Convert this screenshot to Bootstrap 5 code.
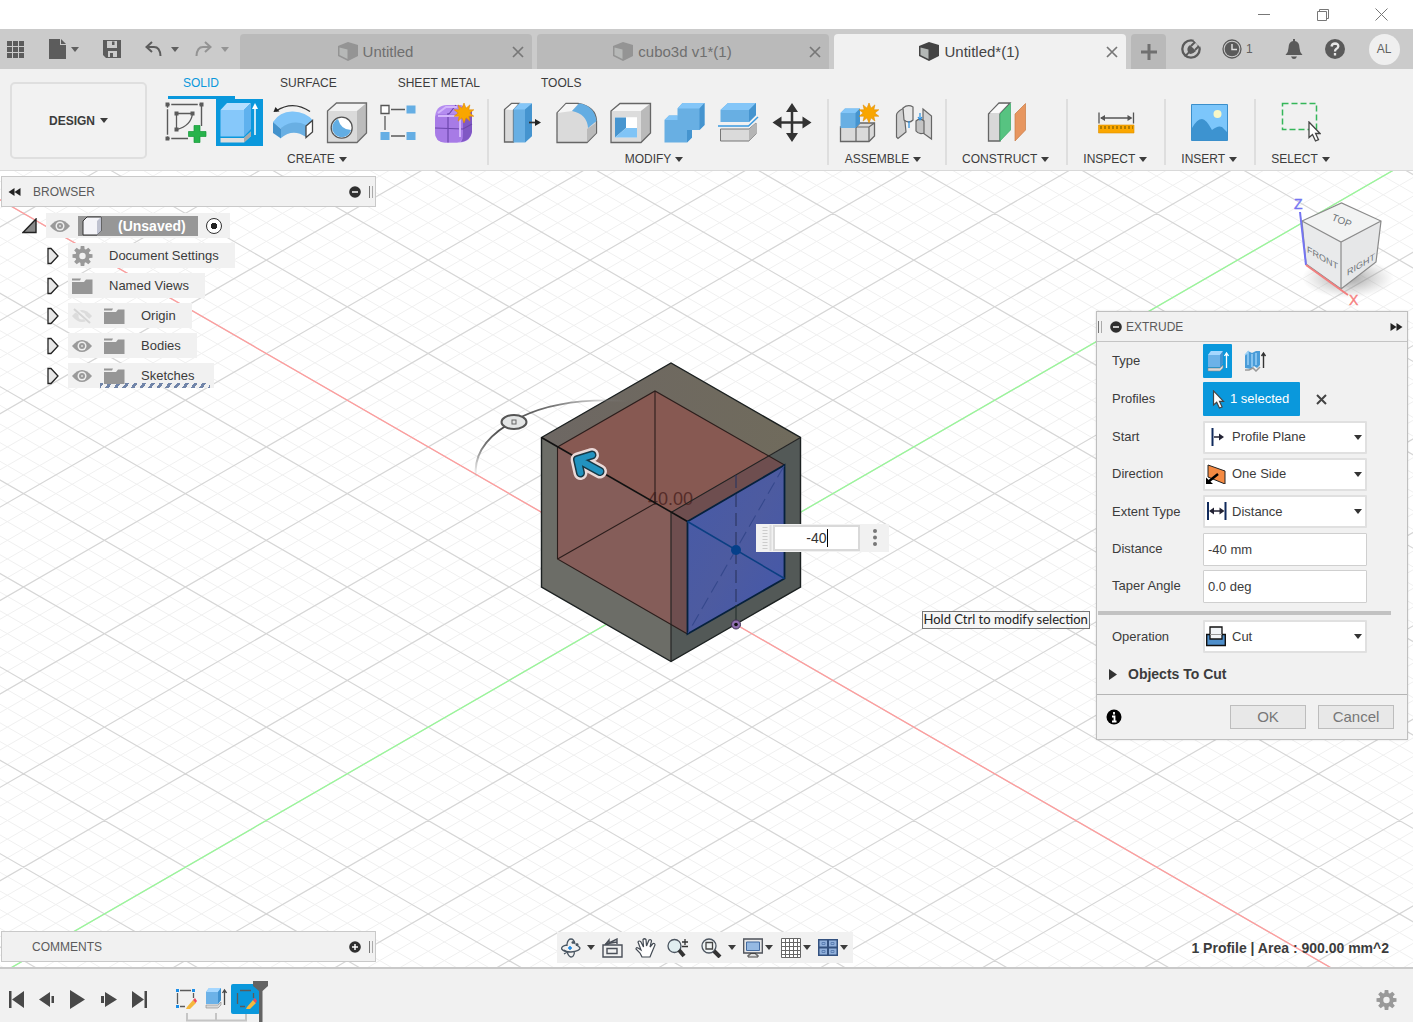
<!DOCTYPE html>
<html lang="en">
<head>
<meta charset="utf-8">
<meta name="viewport" content="width=device-width, initial-scale=1">
<title>Untitled*(1)</title>
<link href="https://cdn.jsdelivr.net/npm/bootstrap@5.3.0/dist/css/bootstrap.min.css" rel="stylesheet">
<style>
:root{--accent:#0a98dc;--panel:#f1f1f1;--line:#c9c9c9;--ink:#3c3c3c}
body{font-family:"Liberation Sans",Arial,sans-serif;font-size:13px;line-height:16px;color:var(--ink);background:#fff}
svg{display:block;flex:none}
button{color:inherit}
.plain{border:0;background:none;padding:0;display:flex;align-items:center;justify-content:center}
.dropdown-toggle::after{border-top:5px solid;border-left:4px solid transparent;border-right:4px solid transparent;margin-left:5px;vertical-align:2px}
.window-bar{height:29px;padding-right:25px;gap:46px}
.app-bar{height:40px;background:#cbcbcb;color:#5f5f5f}
.quick-tools{width:240px;padding-left:6px}
.quick-tools .step::after{margin-left:9px}
.doc-tab{height:35px;margin-right:5px;background:#bababa;border-radius:4px 4px 0 0;color:#6f6f6f;font-size:15px;flex:1 1 0;padding-right:7px}
.doc-tab.active{background:var(--panel);color:#444}
.doc-tab a{color:inherit;text-decoration:none}
.doc-tab .name{gap:5px}
.new-tab{width:35px;height:35px;background:#b9b9b9;border-radius:4px 4px 0 0}
.session{width:247px;padding-left:15px;font-size:12px}
.s-job{margin-left:21px}.s-bell{margin-left:32px}.s-help{margin-left:22px}
.avatar{width:31px;height:31px;border-radius:50%;background:#efefef;margin-left:24px}
.ribbon{height:102px;background:var(--panel);border-bottom:1px solid #d9d9d9;font-size:12px;padding-left:10px}
.workspace-btn{width:137px;height:77px;margin-top:13px;border:2px solid #dfdfdf;border-radius:5px;background:#f2f2f2;font-weight:700}
.ribbon-body{padding-left:8px}
.ribbon-tabs{height:30px;padding-left:13px}
.ribbon-tabs .nav-link{color:inherit;padding:6px 16px 5px;border-bottom:3px solid transparent;margin-right:29px}
.ribbon-tabs .nav-link.active{color:var(--accent);border-color:var(--accent);padding:6px 16px 5px 15px}
.tool-group{height:66px;padding:0 5px 0 3px}
.tool-group + .tool-group{border-left:2px solid #dedede}
.tool-group.wide{padding:0 8px 0 6px}
.tool-group .plain.big{width:54px;height:48px}
.tool-label{padding:4px 12px 0;height:20px}
.tool-group:nth-child(-n+3) .tool-label{padding-right:18px}
.tool-label .dropdown-toggle::after{margin-left:4px}
.canvas-area{min-height:700px;overflow:hidden;background:#fff}
.panel-head{width:375px;height:31px;background:var(--panel);border:1px solid var(--line);font-size:12px;color:#5b5b5b;padding:0 2px 0 6px}
.browser-head{top:5px;left:1px}
.comments-head{bottom:5px;left:1px}
.grip{width:4px;height:12px;border-left:1px solid #777;border-right:1px solid #aaa}
.tree{top:42px;left:22px}
.tree li{height:25px;margin-bottom:5px}
.tree .chip{background:var(--panel);height:25px;padding-right:16px}
.tree .kids{padding-left:24px}
.root-name{background:#979797;color:#fff;font-size:14px;font-weight:700;height:20px;padding-right:12px;border:0}
.activate{appearance:none;width:16px;height:16px;border:1px solid #333;border-radius:50%;background:radial-gradient(circle,#222 0 3px,#fff 3px)}
.edited{background:repeating-linear-gradient(125deg,#7084a8 0 3px,transparent 3px 7px) bottom/100% 5px no-repeat}
.dialog-box{top:140px;right:5px;width:312px;background:var(--panel);border:1px solid #bfbfbf;box-shadow:0 0 2px #0002}
.dialog-head{height:30px;border-bottom:1px solid #c4c4c4;font-size:12px;color:#5b5b5b;padding:0 4px 0 1px}
.field-rows{height:263px}
.field-row label,.field-row .lab{width:91px}
.field-row{padding-left:15px}
.op-row{padding-top:5px;padding-bottom:1px}
.box{width:164px;position:relative}
.box select,.box input{width:100%;height:33px;border:2px solid #e0e0e0;background:#fff;color:inherit;border-radius:1px;padding:0 3px;outline:0;appearance:none}
.box input{border:1px solid #cfcfcf;padding:0 4px}
.box select{padding-left:27px}
.box svg{position:absolute;top:6px;left:3px;pointer-events:none}
.box::after{content:"";position:absolute;right:5px;top:14px;border:4px solid transparent;border-top:5px solid #333;pointer-events:none}
.box.entry::after{display:none}
.sel-btn{background:var(--accent);color:#fff;border:0;height:34px;border-radius:1px}
.type-btn{width:29px}
.pick-btn{width:97px}
.objects-btn{font-size:14px}
.rule-bar{height:4px;background:#c2c2c2;margin:6px 16px 0 1px}
.dialog-foot{height:45px;border-top:1px solid #b5b5b5;padding:0 13px 0 9px}
.foot-btn{width:76px;height:24px;border:1px solid #bdbdbd;background:#e8e8e8;color:#777;font-size:15px;line-height:20px;padding:0}
.view-cube{top:19px;right:13px}
.mini-entry{left:calc(50% + 49px);top:calc(50% - 45px);width:133px;height:28px;background:var(--panel)}
.mini-entry input{width:87px;height:26px;border:2px solid #d9d9d9;font-size:14px;text-align:right;padding:0 31px 0 0;color:#333;outline:0}
.caret-bar{width:1px;height:18px;background:#000;left:71px;top:5px}
.hint{left:calc(50% + 215px);top:calc(50% + 42px);height:18px;border:1px solid #777;background:#f6f6f6;color:#222;font:13px/15px Lato,sans-serif;padding:0 1px;white-space:nowrap}
.nav-tools{left:50%;bottom:4px;height:31px;width:296px;margin-left:-150px;background:var(--panel);font-size:12px}
.nav-tools .dropdown-toggle::after{margin-left:2px;vertical-align:0}
.selection-info{right:24px;bottom:11px;font-size:14px;font-weight:700}
.timeline{height:55px;background:var(--panel);border-top:2px solid #c9c9c9;padding:8px 16px 0 8px;color:#484848}
.play-set{gap:15px}
.history{margin-left:26px}
</style>
</head>
<body class="d-flex flex-column min-vh-100 m-0">

<svg width="0" height="0" class="position-absolute" aria-hidden="true">
  <defs>
    <symbol id="doc" viewBox="0 0 20 20"><path d="M0 4 10 0 20 3 20 14 10 19 0 14z" fill="currentColor"/><path d="M1.500 5.500 9.500 7.500V17L1.500 13z" fill="#b4b8b6"/></symbol>
    <symbol id="close" viewBox="0 0 12 12"><path d="M1 1 11 11M11 1 1 11" stroke="#777" stroke-width="1.700"/></symbol>
    <symbol id="star" viewBox="-11 -11 22 22"><path d="M0-10 2-4.800 5.900-8.100 4.800-3.200 9.800-3.200 5.800 0 9.800 3.200 4.800 3.200 5.900 8.100 2 4.800 0 10-2 4.800-5.900 8.100-4.800 3.200-9.800 3.200-5.800 0-9.800-3.200-4.800-3.200-5.900-8.100-2-4.800z" fill="#f9a600" stroke="#e08b00" stroke-width=".6"/></symbol>
    <symbol id="eye" viewBox="0 0 20 14"><path d="M0 7Q10-5 20 7 10 19 0 7z" fill="#9a9a9a"/><circle cx="10" cy="7" r="4.500" fill="#efefef"/><circle cx="10" cy="7" r="3" fill="#9a9a9a"/><circle cx="10" cy="7" r="1" fill="#ddd"/></symbol>
    <symbol id="eyeoff" viewBox="0 0 20 16"><path d="M0 8Q10-4 20 8 10 20 0 8z" fill="#dcdcdc"/><circle cx="10" cy="8" r="3.500" fill="#f1f1f1"/><path d="M2 0 19 15" stroke="#f1f1f1" stroke-width="4"/><path d="M2 1 18 15" stroke="#d5d5d5" stroke-width="2"/></symbol>
    <symbol id="folder" viewBox="0 0 21 16"><path d="M0 4H12L14 1.500H20.500V16H0z" fill="#969696"/><path d="M0 .5H9L8 2.500H0z" fill="#969696"/></symbol>
    <symbol id="twist" viewBox="0 0 12 18"><path d="M1 1.500H4L11 9 4 16.500H1z" fill="#e8e8e8" stroke="#222" stroke-width="1.300"/></symbol>
    <symbol id="gear" viewBox="-10 -10 20 20"><g fill="#999"><path d="M-1.800-10H1.800L2.300-5H-2.300zM-1.800 10H1.800L2.300 5H-2.300z"/><path d="M-1.800-10H1.800L2.300-5H-2.300zM-1.800 10H1.800L2.300 5H-2.300z" transform="rotate(45)"/><path d="M-1.800-10H1.800L2.300-5H-2.300zM-1.800 10H1.800L2.300 5H-2.300z" transform="rotate(90)"/><path d="M-1.800-10H1.800L2.300-5H-2.300zM-1.800 10H1.800L2.300 5H-2.300z" transform="rotate(135)"/></g><circle r="5.200" fill="none" stroke="#999" stroke-width="4"/></symbol>
    <symbol id="box-up" viewBox="0 0 22 22"><path d="M1 5 4 1H16V13L13 17H1z" fill="#6cb2e8"/><path d="M1 5 4 1H16L13 5z" fill="#a5d7ff"/><path d="M13 5 16 1V13L13 17z" fill="#3f92d0"/><path d="M1 18H13L16 15V18L13 21H1z" fill="#d9d9d9" stroke="#888" stroke-width=".6"/><path d="M19.500 18V3M17.500 6 19.500 3 21.500 6" stroke="currentColor" stroke-width="1.300" fill="none"/></symbol>
    <symbol id="arrow" viewBox="0 0 13 21"><path d="M1 1V16.500L4.500 13.500 7.500 20 10.500 18.700 7.600 12.500H12z" fill="#fff" stroke="#444" stroke-width="1.300"/></symbol>
    <symbol id="left2" viewBox="0 0 12 8"><path d="M6 0V8L0 4zM12 0V8L6 4z" fill="#222"/></symbol>
    <symbol id="minus" viewBox="0 0 12 12"><circle cx="6" cy="6" r="5.800" fill="#2f2f2f"/><path d="M3 6H9" stroke="#fff" stroke-width="1.500"/></symbol>
    <symbol id="sk" viewBox="0 0 22 22"><path d="M5 2.500H16M2.500 5V16M18.500 5V10M5 18.500H10" fill="none" stroke="#5b5b5b" stroke-width="1.300"/><path d="M12 19 18 12 21 15 15 21 11 21z" fill="#f5b83d"/><path d="M18 12 20 10 22 13 20.500 15z" fill="#f04a5a"/></symbol>
    <linearGradient id="topFace"><stop offset="0" stop-color="#6d6763"/><stop offset="1" stop-color="#706b5c"/></linearGradient>
    <linearGradient id="blueFace" x2="1" y2="1"><stop offset="0" stop-color="#465aa8"/><stop offset=".5" stop-color="#4d5ba0"/><stop offset="1" stop-color="#4357ab"/></linearGradient>
    <linearGradient id="arcFade"><stop offset="0" stop-color="#555"/><stop offset=".3" stop-color="#777"/><stop offset="1" stop-color="#888" stop-opacity="0"/></linearGradient>
    <linearGradient id="arcDown" x1="0" y1="1" x2="0" y2="0"><stop offset="0" stop-color="#999" stop-opacity="0"/><stop offset=".6" stop-color="#777"/><stop offset="1" stop-color="#444"/></linearGradient>
    <radialGradient id="shade"><stop offset="0" stop-color="#777" stop-opacity=".7"/><stop offset="1" stop-color="#999" stop-opacity="0"/></radialGradient>
  </defs>
</svg>

<header>
  <div class="window-bar d-flex justify-content-end align-items-center">
    <button class="plain" aria-label="Minimize"><svg width="13" height="13"><path d="M0 6.500H12" stroke="#777"/></svg></button>
    <button class="plain" aria-label="Restore"><svg width="12" height="13" fill="none" stroke="#777"><path d="M.5 3.500H9.500V12.500H.5zM2.500 3V1.500H11.500V10.500H10"/></svg></button>
    <button class="plain" aria-label="Close window"><svg width="13" height="13"><path d="M.5.5 12.500 12.500M12.500.5.5 12.500" stroke="#777"/></svg></button>
  </div>

  <div class="app-bar d-flex align-items-end">
    <div class="quick-tools d-flex align-items-center align-self-stretch">
      <button class="plain" aria-label="Data panel"><svg width="19" height="18" fill="#5c5c5c"><path d="M1 1h5v5H1zM7 1h5v5H7zM13 1h5v5h-5zM1 7h5v5H1zM7 7h5v5H7zM13 7h5v5h-5zM1 13h5v5H1zM7 13h5v5H7zM13 13h5v5h-5z"/></svg></button>
      <button class="plain dropdown-toggle ms-4" aria-label="File"><svg width="17" height="20" fill="#5c5c5c"><path d="M0 0H11V6H17V20H0z"/><path d="M12 0 17 5H12z"/></svg></button>
      <button class="plain ms-4" aria-label="Save"><svg width="18" height="18"><path d="M0 0H18V18H3L0 15z" fill="#5c5c5c"/><path d="M4 1H14V8H4zM5 11H14V17H5z" fill="#cbcbcb"/><path d="M9 1.500H11.500V5H9zM7 13H10V17H7z" fill="#5c5c5c"/></svg></button>
      <button class="plain dropdown-toggle step ms-4" aria-label="Undo"><svg width="17" height="16" fill="none" stroke="#5c5c5c" stroke-width="2"><path d="M7 1 1.500 6 7 11M2 6H9Q15 6 15.500 15"/></svg></button>
      <button class="plain dropdown-toggle step ms-3 opacity-50" aria-label="Redo"><svg width="17" height="16" fill="none" stroke="#5c5c5c" stroke-width="2"><path d="M10 1 15.500 6 10 11M15 6H8Q2 6 1.500 15"/></svg></button>
    </div>
    <nav class="d-flex flex-fill">
      <div class="doc-tab d-flex align-items-center"><div class="name flex-fill d-flex justify-content-center align-items-center"><svg class="opacity-50" width="20" height="20"><use href="#doc"/></svg><a href="#">Untitled</a></div><button class="plain" aria-label="Close Untitled"><svg width="14" height="12"><use href="#close"/></svg></button></div>
      <div class="doc-tab d-flex align-items-center"><div class="name flex-fill d-flex justify-content-center align-items-center"><svg class="opacity-50" width="20" height="20"><use href="#doc"/></svg><a href="#">cubo3d v1*(1)</a></div><button class="plain" aria-label="Close cubo3d"><svg width="14" height="12"><use href="#close"/></svg></button></div>
      <div class="doc-tab active d-flex align-items-center"><div class="name flex-fill d-flex justify-content-center align-items-center"><svg width="20" height="20"><use href="#doc"/></svg><a href="#" aria-current="page">Untitled*(1)</a></div><button class="plain" aria-label="Close Untitled (1)"><svg width="14" height="12"><use href="#close"/></svg></button></div>
      <button class="plain new-tab" aria-label="New design"><svg width="16" height="16"><path d="M8 0V16M0 8H16" stroke="#707070" stroke-width="3"/></svg></button>
    </nav>
    <div class="session d-flex align-items-center align-self-stretch">
      <button class="plain" aria-label="Extensions"><svg width="20" height="20"><circle cx="10" cy="10" r="8.700" fill="none" stroke="#5a5a5a" stroke-width="2.300"/><path d="M14 0 20 7" stroke="#cbcbcb" stroke-width="4"/><path d="M3 17 7 13Q5 9 9 6L15 12Q11 16 8 14.500L5 18z" fill="#5a5a5a"/><path d="M10 7 14 3M14 11 18 7" stroke="#5a5a5a" stroke-width="2"/></svg></button>
      <button class="plain s-job" aria-label="Job status"><svg class="me-1" width="20" height="20"><circle cx="10" cy="10" r="9" fill="none" stroke="#5a5a5a" stroke-width="1.300"/><circle cx="10" cy="10" r="7.300" fill="#5a5a5a"/><path d="M10 5V10.500H15" stroke="#ddd" stroke-width="1.500" fill="none"/></svg>1</button>
      <button class="plain s-bell" aria-label="Notifications"><svg width="18" height="20" fill="#5a5a5a"><path d="M8 0H10V2Q14.500 3 14.500 9 14.500 13 17.500 16H.5Q3.500 13 3.500 9 3.500 3 8 2zM6 17.500H12Q11 20 9 20 7 20 6 17.500z"/></svg></button>
      <button class="plain s-help" aria-label="Help"><svg width="20" height="20"><circle cx="10" cy="10" r="10" fill="#5a5a5a"/><path d="M6.500 7.500Q7 4.500 10 4.500 13.500 4.700 13.300 7.500 13 9 11.200 10 10 10.800 10 12.500M10 14V16.500" fill="none" stroke="#e8e8e8" stroke-width="2.300"/></svg></button>
      <button class="plain avatar" aria-label="Account">AL</button>
    </div>
  </div>

  <div class="ribbon d-flex">
    <button class="workspace-btn dropdown-toggle">DESIGN</button>
    <div class="ribbon-body flex-fill">
      <nav class="ribbon-tabs nav flex-nowrap">
        <a class="nav-link active" href="#">SOLID</a><a class="nav-link" href="#">SURFACE</a><a class="nav-link" href="#">SHEET METAL</a><a class="nav-link" href="#">TOOLS</a>
      </nav>
      <div class="d-flex">
        <div class="tool-group">
          <div class="d-flex">
            <button class="plain big" aria-label="Create sketch"><svg width="48" height="48"><path d="M6.500 5.500H40.500V27M6.500 5.500V39.500H27" fill="none" stroke="#5a5a5a" stroke-width="1.400"/><path d="M15.500 14.500H31.500Q30 27 15.500 30.500z" fill="none" stroke="#5a5a5a" stroke-width="1.300"/><path d="M4.500 3.500h4v4h-4zM38.500 3.500h4v4h-4zM4.500 37.500h4v4h-4zM13.500 12.500h4v4h-4zM29.500 12.500h4v4h-4zM13.500 28.500h4v4h-4z" fill="#5a5a5a"/><path d="M9.500 3V8M37.500 3V8M4 9.500H9M4 36.500H9M9.500 37V42" stroke="#f1f1f1" stroke-width="1.500"/><path d="M33 26.500H39V32.500H45V37.500H39V43.500H33V37.500H27.500V32.500H33z" fill="#27b34b" stroke="#14993a" stroke-width=".7"/></svg></button>
            <button class="plain big" aria-label="Extrude"><svg width="48" height="48"><path d="M1 0H48V47H1z" fill="#0a98dc"/><path d="M5.500 11H29V37.500H5.500z" fill="#86c8fa"/><path d="M5.500 11 12 4H36L29 11z" fill="#b3deff"/><path d="M29 11 36 4V30L29 37.500z" fill="#5fb1ee"/><path d="M5.500 39H29L36 32.500V37L29 43.500H5.500z" fill="#dedede"/><path d="M29 39 36 32.500V37L29 43.500z" fill="#a9a9a9"/><path d="M40 36V9" stroke="#fff" stroke-width="1.500"/><path d="M37 10 40 4 43 10z" fill="#fff"/></svg></button>
            <button class="plain big" aria-label="Revolve"><svg width="48" height="48"><path d="M7 12Q24 1 41 12.500" fill="none" stroke="#333" stroke-width="1.400"/><path d="M4.500 13 6.500 8 10.500 12.500z" fill="#222"/><path d="M4 23Q11 12 24 12.500 37 13 44 21.500L37 27Q24 21 12 30z" fill="#7fc4f8"/><path d="M12 29Q24 20 37 26V38Q24 29 12 39z" fill="#69afe3"/><path d="M4 23 12 30V39.500L4 34z" fill="#4392cc"/><path d="M37 27 43.500 21.500V33L37 38.500z" fill="#fff" stroke="#444" stroke-width="1.300"/></svg></button>
            <button class="plain big" aria-label="Hole"><svg width="48" height="48"><path d="M4.500 12 13.500 4H43.500V34L34 43.500H4.500z" fill="#dadada"/><path d="M4.500 12 13.500 4H43.500L34 12z" fill="#f3f3f3"/><path d="M34 12 43.500 4V34L34 43.500z" fill="#bcbcbc"/><path d="M4.500 12 13.500 4H43.500V34L34 43.500H4.500z" fill="none" stroke="#6b6b6b" stroke-width="1.300"/><circle cx="18.700" cy="28.700" r="10.500" fill="#fff" stroke="#555" stroke-width="1.300"/><path d="M15 20Q18 31 28 31A9.500 9.500 0 1 1 15 20z" fill="#62ade3"/></svg></button>
            <button class="plain big" aria-label="Pattern"><svg width="48" height="48"><path d="M14 10.500H28M8 17V31M14 37H28" fill="none" stroke="#5a5a5a" stroke-width="1.300"/><path d="M29.500 6.500h9v8h-9zM3.500 33h9v8h-9zM29.500 33h9v8h-9z" fill="#65aee4"/><path d="M4 6.500h8v8H4z" fill="#fff" stroke="#555" stroke-width="1.300"/></svg></button>
            <button class="plain big" aria-label="Create form"><svg width="48" height="48"><path d="M4 20Q4 6 16 6H30Q41 10 41 20V32Q40 43 28 43.500H14Q4 43 4 33z" fill="#b48cf0"/><path d="M4 20Q4 15 9 15H27Q32 16 32 22V36Q31 43 26 43.500H14Q4 43 4 33z" fill="#a77be6"/><path d="M32 17 41 11V33Q39 42 30 43 32 40 32 35z" fill="#8058c4"/><path d="M4 29 32 30 41 25M17 14V43.500M18 15 25 6" fill="none" stroke="#6c46ac" stroke-width="1.200"/><path d="M7 14 15 8H26M7 17H29V38" stroke="#d3b6fb" stroke-width="2" fill="none"/><use href="#star" x="22" y="3" width="22" height="22"/></svg></button>
          </div>
          <div class="tool-label"><button class="plain dropdown-toggle mx-auto">CREATE</button></div>
        </div>
        <div class="tool-group wide">
          <div class="d-flex">
            <button class="plain big" aria-label="Press pull"><svg width="48" height="48"><path d="M6.500 10.500 13.500 4.500H21L15.500 11V43H6.500z" fill="#dadada" stroke="#666" stroke-width="1.300"/><path d="M7.500 10.500 14 5H20L14.500 11z" fill="#fafafa"/><path d="M15.500 10.500 21.500 4.500H34V37L27 43.500H15.500z" fill="#68afe3"/><path d="M15.500 10.500 21.500 4.500H34L27 10.500z" fill="#84c6f8"/><path d="M27 10.500 34 4.500V37L27 43.500z" fill="#4594cf"/><path d="M31 23.500H38" stroke="#333" stroke-width="1.700"/><path d="M37 20 43 23.500 37 27z" fill="#222"/></svg></button>
            <button class="plain big" aria-label="Fillet"><svg width="48" height="48"><path d="M5 14 14 4.500H26Q44 8 44.500 22V34L35 43.500H5z" fill="#dadada" stroke="#666" stroke-width="1.300"/><path d="M5.500 14 14 5H26L20 12z" fill="#f6f6f6"/><path d="M35 30 44 24V34L35 43z" fill="#bababa"/><path d="M20 12 27 4.500Q42 6 44.500 22L36 29Q35 15 20 12z" fill="#64ade2"/></svg></button>
            <button class="plain big" aria-label="Shell"><svg width="48" height="48"><path d="M5 12 14 4.500H44.500V34L35 43.500H5z" fill="#dcdcdc"/><path d="M5 12 14 4.500H44.500L35 12z" fill="#f6f6f6"/><path d="M35 12 44.500 4.500V34L35 43.500z" fill="#bababa"/><path d="M5 12 14 4.500H44.500V34L35 43.500H5z" fill="none" stroke="#666" stroke-width="1.300"/><path d="M9 18H31V38.500H9z" fill="#f0f0f0"/><path d="M9 18.500H20V29L9 38.500z" fill="#4795cf"/><path d="M20 29H31V38.500H9z" fill="#80c4f6"/><path d="M20 18.500H31V29H20z" fill="#fff"/></svg></button>
            <button class="plain big" aria-label="Combine"><svg width="48" height="48"><path d="M4.500 21 9 16.500H17.500V9.500L22.500 4H44.500V26L39.500 31H32V38.500L27 43.500H4.500z" fill="#68afe3"/><path d="M17.500 9.500 22.500 4H44.500L39.500 9.500zM4.500 21 9 16.500H17.500V21z" fill="#84c6f8"/><path d="M39.500 9.500 44.500 4V26L39.500 31zM27 31H32V38.500L27 43.500z" fill="#4594cf"/></svg></button>
            <button class="plain big" aria-label="Split body"><svg width="48" height="48"><path d="M6.500 11 14 4H42V16L35 23H6.500z" fill="#68afe3"/><path d="M6.500 11 14 4H42L35 11z" fill="#84c6f8"/><path d="M35 11 42 4V16L35 23z" fill="#4594cf"/><path d="M4 27H34.500L44 18" fill="none" stroke="#3d9be0" stroke-width="1.500"/><path d="M6.500 30H35L42 24V35L35 42H6.500z" fill="#dadada" stroke="#777"/><path d="M35 30 42 24V35L35 42z" fill="#b5b5b5"/></svg></button>
            <button class="plain big" aria-label="Move"><svg width="48" height="48"><path d="M24 8V39M8 23.500H40" stroke="#333" stroke-width="2.500"/><path d="M18 13 24 4 30 13zM18 34 24 43 30 34zM13.500 17.500 4.500 23.500 13.500 29.500zM34.500 17.500 43.500 23.500 34.500 29.500z" fill="#333"/></svg></button>
          </div>
          <div class="tool-label"><button class="plain dropdown-toggle mx-auto">MODIFY</button></div>
        </div>
        <div class="tool-group">
          <div class="d-flex">
            <button class="plain big" aria-label="New component"><svg width="48" height="48"><path d="M5.500 28H21L25 24H39.500V37L34 42.500H5.500z" fill="#dadada" stroke="#666" stroke-width="1.300"/><path d="M21 28V42.500M21 28H34L39.500 24M34 28V42" stroke="#666" stroke-width="1.200" fill="none"/><path d="M5.500 14 10 9.500H25V24L20.500 29H5.500z" fill="#68afe3"/><path d="M5.500 14 10 9.500H25L20.500 14z" fill="#84c6f8"/><path d="M20.500 14 25 9.500V24L20.500 29z" fill="#4594cf"/><use href="#star" x="23" y="3" width="22" height="22"/></svg></button>
            <button class="plain big" aria-label="Joint"><svg width="48" height="48" stroke="#666" stroke-width="1.200"><path d="M7.500 16Q7.500 13 15 9L16 23 17 33 9 39.500 7.500 38z" fill="#cfcfcf"/><path d="M14 9Q19 5 24 8V21Q20 25 15 21z" fill="#e8e8e8"/><path d="M34 10 42.500 17V40L34 34z" fill="#d4d4d4"/><path d="M27 22Q31 18 35 22V34Q30 36 27 32z" fill="#c4c4c4"/><path d="M20 22V29M31 14V20M29 18 31 21 33 18" stroke="#2a8fe0" fill="none"/></svg></button>
          </div>
          <div class="tool-label"><button class="plain dropdown-toggle mx-auto">ASSEMBLE</button></div>
        </div>
        <div class="tool-group">
          <button class="plain big mx-auto" aria-label="Offset plane"><svg width="48" height="48"><path d="M6.500 15 17 4H28L18 15V42H6.500z" fill="#d8d8d8" stroke="#666" stroke-width="1.300"/><path d="M8 14 17 5H26L17 14z" fill="#fafafa"/><path d="M18 15 28.500 4.500V31L18 42z" fill="#57c381" stroke="#38a866" stroke-width=".7"/><path d="M33 15 43.500 4.500V31L33 42z" fill="#e7965f" stroke="#c97b45" stroke-width=".7"/></svg></button>
          <div class="tool-label"><button class="plain dropdown-toggle mx-auto">CONSTRUCT</button></div>
        </div>
        <div class="tool-group">
          <button class="plain big mx-auto" aria-label="Measure"><svg width="48" height="48"><path d="M8 13.500V24.500M42.500 13.500V24.500M10 19H40" stroke="#555" stroke-width="1.300"/><path d="M9 19 14 16V22zM41.500 19 36.500 16V22z" fill="#555"/><path d="M7.500 26H43V34H7.500z" fill="#fba700" stroke="#de9000" stroke-width=".6"/><path d="M9.500 28.500H42" stroke="#6b5200" stroke-width="3" stroke-dasharray="1 3"/></svg></button>
          <div class="tool-label"><button class="plain dropdown-toggle mx-auto">INSPECT</button></div>
        </div>
        <div class="tool-group">
          <button class="plain big mx-auto" aria-label="Insert image"><svg width="48" height="48"><path d="M6.500 5.500H42.500V41.500H6.500z" fill="#7cc6fb" stroke="#3b8fcb"/><path d="M7 29Q12 20 17 20 21 20 27 31 33 26 37 28L42 33V41H7z" fill="#3d93d0"/><circle cx="32.500" cy="15" r="4" fill="#f7f8c8"/></svg></button>
          <div class="tool-label px-2"><button class="plain dropdown-toggle mx-auto px-1">INSERT</button></div>
        </div>
        <div class="tool-group">
          <button class="plain big mx-auto" aria-label="Select"><svg width="48" height="48"><path d="M6.500 4.500H40.500V30.500H6.500z" fill="none" stroke="#35b65a" stroke-width="1.500" stroke-dasharray="6 3"/><use href="#arrow" x="32" y="22" width="13" height="21"/></svg></button>
          <div class="tool-label"><button class="plain dropdown-toggle mx-auto">SELECT</button></div>
        </div>
      </div>
    </div>
  </div>
</header>

<main class="canvas-area position-relative flex-fill">
  <!-- modelling scene, kept centred in the canvas -->
  <svg class="position-absolute top-0 start-0 w-100 h-100">
    <svg x="50%" y="50%" width="1" height="1" overflow="visible">
      <g transform="translate(-706.500 -569)">
        <path id="gridMinor" fill="none" stroke="#f0f0f0" stroke-width="1"/>
        <path id="gridMajor" fill="none" stroke="#d6d6d6" stroke-width="1.200"/>
        <path d="M-829-278.500 2171 1452.500" stroke="#ff9c9c" stroke-width="1.300"/>
        <path d="M-829 1452.500 2171-278.500" stroke="#98f898" stroke-width="1.300"/>
        <path d="M541.500 437.500 671 363 800.500 437.500 671 512.500z" fill="url(#topFace)"/>
        <path d="M541.500 437.500 671 512.500V661.500L541.500 587z" fill="#6c6d67"/>
        <path d="M671 512.500 800.500 437.500V587L671 661.500z" fill="#535957"/>
        <path d="M557.500 447 655 391 768.500 456 671 512.500z" fill="#875952"/>
        <path d="M557.500 447 671 512.500V624.500L557.500 559z" fill="#855d59"/>
        <path d="M671 512.500 768.500 456 784.500 465 687.500 521.500V634L671 624.500z" fill="#6e4e4f"/>
        <path d="M687.500 521.500 784.500 465V578.500L687.500 634z" fill="url(#blueFace)"/>
        <text x="648" y="505" font-size="18" fill="#552c29">40.00</text>
        <g fill="none" stroke="#2c1e1c" stroke-width="1.100">
          <path d="M557.500 447 655 391 784.500 465M557.500 447V559L687.500 634M655 391V503.500L557.500 559"/>
          <path d="M671 512.500 800.500 437.500M671 512.500V661.500" stroke="#222"/>
          <path d="M541.500 437.500 671 363 800.500 437.500V587L671 661.500 541.500 587z" stroke="#1b2020" stroke-width="1.400"/>
          <path d="M541.500 437.500 687.500 521.500" stroke="#111" stroke-width="1.600"/>
          <path d="M687.500 521.500 784.500 465V578.500L687.500 634z" stroke="#06213d" stroke-width="1.800"/>
          <path d="M736 475V605" stroke="#2a3560" stroke-dasharray="13 6"/><path d="M736 605V620" stroke="#26302f"/>
          <path d="M784 466 688 633" stroke="#35488c" stroke-dasharray="13 6"/>
          <path d="M687.500 521.500 784.500 578.500" stroke="#0b3f82" stroke-width="1.500"/>
        </g>
        <circle cx="736" cy="550" r="5" fill="#05408a"/>
        <circle cx="736" cy="624.500" r="4.500" fill="#9070b0" stroke="#443355"/><circle cx="736" cy="624.500" r="1.800" fill="#111"/>
        <path d="M476 478Q472 447 507 425" fill="none" stroke="url(#arcDown)" stroke-width="2"/>
        <path d="M521 417Q562 397 628 401" fill="none" stroke="url(#arcFade)" stroke-width="1.800"/>
        <ellipse cx="514" cy="422" rx="12.500" ry="7" fill="#e4e6e6" stroke="#555" stroke-width="2"/><rect x="512" y="420" width="4" height="4" fill="none" stroke="#666"/>
        <g fill="none" stroke-linecap="round" stroke-linejoin="round">
          <path d="M592 455 577.500 459.500 580.500 473M579 460 600 471.500" stroke="#ead9d8" stroke-width="14"/>
          <path d="M592 455 577.500 459.500 580.500 473M579 460 600 471.500" stroke="#173845" stroke-width="9"/>
          <path d="M592 455 577.500 459.500 580.500 473M579 460 600 471.500" stroke="#2292bf" stroke-width="6"/>
        </g>
      </g>
    </svg>
  </svg>

  <section class="browser-head position-absolute">
    <div class="panel-head d-flex align-items-center"><svg width="13" height="8"><use href="#left2"/></svg><span class="flex-fill ps-2 ms-1">BROWSER</span><button class="plain me-2" aria-label="Collapse"><svg width="12" height="12"><use href="#minus"/></svg></button><span class="grip"></span></div>
  </section>
  <ul class="tree list-unstyled position-absolute m-0">
    <li class="d-flex align-items-center"><svg class="me-2" width="16" height="16"><path d="M14 1V14.500H1z" fill="#888" stroke="#222" stroke-width="1.400"/></svg>
      <div class="chip d-flex align-items-center ps-1 pe-2"><svg width="20" height="14"><use href="#eye"/></svg><button class="root-name d-flex align-items-center ms-2 ps-1"><svg class="me-3" width="20" height="20"><path d="M1 5 5 1H19V15L15 19H1z" fill="#f4f4f8" stroke="#333"/><path d="M15 5 19 1V15L15 19z" fill="#bfc2d0"/></svg>(Unsaved)</button>
      <input type="radio" checked aria-label="Activate component" class="activate ms-2"></div></li>
    <li class="kids d-flex align-items-center"><svg class="me-2" width="14" height="18"><use href="#twist"/></svg><div class="chip d-flex align-items-center ps-1"><svg class="me-3" width="21" height="20"><use href="#gear"/></svg>Document Settings</div></li>
    <li class="kids d-flex align-items-center"><svg class="me-2" width="14" height="18"><use href="#twist"/></svg><div class="chip d-flex align-items-center ps-1"><svg class="me-3" width="21" height="16"><use href="#folder"/></svg>Named Views</div></li>
    <li class="kids d-flex align-items-center"><svg class="me-2" width="14" height="18"><use href="#twist"/></svg><div class="chip d-flex align-items-center ps-1"><svg class="me-2" width="20" height="16"><use href="#eyeoff"/></svg><svg class="ms-1 me-3" width="21" height="16"><use href="#folder"/></svg>Origin</div></li>
    <li class="kids d-flex align-items-center"><svg class="me-2" width="14" height="18"><use href="#twist"/></svg><div class="chip d-flex align-items-center ps-1"><svg class="me-2" width="20" height="14"><use href="#eye"/></svg><svg class="ms-1 me-3" width="21" height="16"><use href="#folder"/></svg>Bodies</div></li>
    <li class="kids d-flex align-items-center"><svg class="me-2" width="14" height="18"><use href="#twist"/></svg><div class="chip d-flex align-items-center ps-1 pe-1"><svg class="me-2" width="20" height="14"><use href="#eye"/></svg><div class="edited d-flex align-items-center ps-1 pe-3 pb-1 pt-1"><svg class="me-3" width="21" height="16"><use href="#folder"/></svg>Sketches</div></div></li>
  </ul>

  <svg class="view-cube position-absolute" width="110" height="125">
    <ellipse cx="58" cy="88" rx="46" ry="20" fill="url(#shade)"/>
    <path d="M12 31 51.500 13 91 31 51 52z" fill="#f2f3f3"/><path d="M12 31 51 52V99L16 74z" fill="#e9eaeb"/><path d="M51 52 91 31 86 72 51 99z" fill="#e6e7e8"/>
    <path d="M12 31 51.500 13 91 31 86 72 51 99 16 74z M12 31 51 52 91 31M51 52V99" fill="none" stroke="#8b8b8b" stroke-width="1.200"/>
    <path d="M10 22 16 75" stroke="#7474f2" stroke-width="2"/><path d="M16 75 58 105" stroke="#f27f7f" stroke-width="2"/>
    <text x="4" y="19" font-size="14" fill="#7474f2" stroke="#7474f2" stroke-width=".4">Z</text><text x="59" y="115" font-size="14" fill="#f68080" stroke="#f68080" stroke-width=".4">X</text>
    <g font-size="9" fill="#6f7478"><text transform="translate(41 30) rotate(22)" font-size="10">TOP</text><text transform="translate(17 62) skewY(30)">FRONT</text><text transform="translate(57 86) skewY(-31)">RIGHT</text></g>
  </svg>

  <div class="mini-entry position-absolute d-flex align-items-center">
    <svg width="17" height="28"><path d="M9 3V26" stroke="#ccc" stroke-width="5" stroke-dasharray="1 2"/><path d="M14.500 1V27" stroke="#ddd" stroke-width="2"/></svg>
    <input type="text" value="-40" aria-label="Distance value"><span class="caret-bar position-absolute"></span>
    <button class="plain ms-2 ps-1" aria-label="More"><svg width="6" height="20" fill="#777"><circle cx="3" cy="3" r="2"/><circle cx="3" cy="9.500" r="2"/><circle cx="3" cy="16" r="2"/></svg></button>
  </div>
  <div class="hint position-absolute">Hold Ctrl to modify selection</div>

  <form class="dialog-box position-absolute" onsubmit="return false">
    <div class="dialog-head d-flex align-items-center"><span class="grip"></span><svg class="ms-2" width="12" height="12"><use href="#minus"/></svg><span class="flex-fill ps-1">EXTRUDE</span><svg width="13" height="8" viewBox="0 0 12 8"><path d="M0 0 6 4 0 8zM6 0 12 4 6 8z" fill="#222"/></svg></div>
    <div class="field-rows d-flex flex-column">
      <div class="field-row flex-fill d-flex align-items-center"><span class="lab">Type</span><button type="button" class="sel-btn type-btn plain px-1" aria-label="Extrude"><svg width="22" height="22"><use href="#box-up"/></svg></button><button type="button" class="plain ms-2 ps-1" aria-label="Thin extrude"><svg width="22" height="22"><path d="M1 5 4 1 8 3 12 1H16V15L13 18 10 16 7 19 1 18z" fill="#4a9cd8"/><path d="M1 5 4 2V15M8 4V17M12 3V15" stroke="#9bd0f6" stroke-width="1.500" fill="none"/><path d="M1 20H5L9 18 12 21 16 17" stroke="#999" fill="none" stroke-width="1.500"/><path d="M19.500 18V3M17.500 6 19.500 3 21.500 6" stroke="#333" stroke-width="1.400" fill="none"/></svg></button></div>
      <div class="field-row flex-fill d-flex align-items-center"><span class="lab">Profiles</span><button type="button" class="sel-btn pick-btn d-flex align-items-center px-2"><svg class="me-1" width="15" height="19"><use href="#arrow"/></svg>1 selected</button><button type="button" class="plain ms-3" aria-label="Clear selection"><svg width="11" height="11"><path d="M1 1 10 10M10 1 1 10" stroke="#444" stroke-width="2"/></svg></button></div>
      <div class="field-row flex-fill d-flex align-items-center"><label for="start">Start</label><div class="box"><select id="start"><option>Profile Plane</option></select><svg width="20" height="20"><path d="M6.500 1V19" stroke="#102a5c" stroke-width="2"/><path d="M8 10H15" stroke="#223" stroke-width="1.500"/><path d="M13 6.500 18 10 13 13.500z" fill="#223"/></svg></div></div>
      <div class="field-row flex-fill d-flex align-items-center"><label for="dir">Direction</label><div class="box"><select id="dir"><option>One Side</option></select><svg width="20" height="20"><path d="M2 1 19 7V20L2 13z" fill="#f58a42" stroke="#222"/><path d="M2 18 12 10" stroke="#000" stroke-width="2.500"/><path d="M0 20V13.500L7 20z"/></svg></div></div>
      <div class="field-row flex-fill d-flex align-items-center"><label for="ext">Extent Type</label><div class="box"><select id="ext"><option>Distance</option></select><svg width="21" height="20"><path d="M2 1V19M19.500 1V19" stroke="#102a5c" stroke-width="2"/><path d="M5 10H16" stroke="#223" stroke-width="1.500"/><path d="M3 10 8 6.500V13.500zM18.500 10 13.500 6.500V13.500z" fill="#223"/></svg></div></div>
      <div class="field-row flex-fill d-flex align-items-center"><label for="dist">Distance</label><div class="box entry"><input id="dist" type="text" value="-40 mm"></div></div>
      <div class="field-row flex-fill d-flex align-items-center"><label for="taper">Taper Angle</label><div class="box entry"><input id="taper" type="text" value="0.0 deg"></div></div>
    </div>
    <div class="rule-bar"></div>
    <div class="field-row op-row d-flex align-items-center"><label for="op">Operation</label><div class="box"><select id="op"><option>Cut</option></select><svg width="20" height="21"><path d="M.7 8.500H19.300V19.500H.7z" fill="#4f8fcb" stroke="#111" stroke-width="1.400"/><path d="M4 1H16V13H4z" fill="#f1f4f7" stroke="#111" stroke-width="1.300"/><path d="M4 8.500H16" stroke="#999"/></svg></div></div>
    <button type="button" class="objects-btn plain fw-bold w-100 justify-content-start py-2 my-1 ps-2"><svg class="ms-1 me-2" width="11" height="11"><path d="M0 0 8 5.500 0 11z" fill="#333"/></svg>Objects To Cut</button>
    <div class="dialog-foot d-flex align-items-center"><svg class="me-auto" width="16" height="16"><circle cx="8" cy="8" r="7.500"/><path d="M8 3V5.500M6 7.500H8.500V12.500M6 12.500H10.500" stroke="#fff" stroke-width="1.800" fill="none"/></svg><button class="foot-btn me-2">OK</button><button class="foot-btn ms-1">Cancel</button></div>
  </form>

  <section class="comments-head position-absolute"><div class="panel-head d-flex align-items-center"><span class="flex-fill ps-4">COMMENTS</span><button class="plain me-2" aria-label="Add comment"><svg width="12" height="12"><use href="#minus"/><path d="M6 3V9" stroke="#fff" stroke-width="1.500"/></svg></button><span class="grip"></span></div></section>

  <div class="nav-tools position-absolute d-flex align-items-center justify-content-between px-1">
    <button class="plain dropdown-toggle" aria-label="Orbit"><svg class="me-1" width="20" height="20" fill="none" stroke="#4a5662" stroke-width="1.300"><path d="M6 6Q7 1 10 1 13 1 14 6M6 14Q8 19 10 19 13 19 13.500 14M6 6V8M6 7Q0 8 .700 11 3 14 10 14 19 13 19 10 18 8 15 7"/><path d="M9 8V12M7 10H11" stroke="#1683e0" stroke-width="1.500"/><path d="M12 3V6M10.500 4.500H13.500M16 5V8M14.500 6.500H17.500M3 12 6 14 3 16"/></svg></button>
    <button class="plain me-1" aria-label="Look at"><svg width="21" height="20" fill="none" stroke="#4a4f58" stroke-width="1.400"><path d="M1 7H20V19H1zM5 10.500H15V15.500H5zM3 7 7 2 7 5 15 1V6M3 6 15 4"/></svg></button>
    <button class="plain me-1" aria-label="Pan"><svg width="21" height="20"><path d="M7 19 5 15 1 11Q1 9 3 10L6 12 3 4Q4 2 6 4L8.500 9 8 1.500Q9.500 0 11 1.500L11.500 8 14 2Q16 1 16.500 3L15 9 18 5.500Q20 5 20 7L17 14 15 19z" fill="#fff" stroke="#434a53" stroke-width="1.200"/></svg></button>
    <button class="plain me-1" aria-label="Zoom"><svg width="22" height="20" fill="none"><circle cx="7.500" cy="8" r="6.500" fill="#e0eef0" stroke="#4c5560" stroke-width="1.300"/><path d="M12 12 17 18" stroke="#333" stroke-width="4"/><path d="M18 1V7M15 4H21M15 8.500H21" stroke="#333" stroke-width="1.300"/></svg></button>
    <button class="plain dropdown-toggle" aria-label="Fit"><svg class="me-1" width="21" height="20" fill="none"><circle cx="8" cy="8" r="7" fill="#eff3f3" stroke="#4c5560" stroke-width="1.300"/><path d="M5 4.500H11.500V11H5z" stroke="#444" stroke-width="1.300"/><path d="M13 13 19 19" stroke="#333" stroke-width="4"/></svg></button>
    <button class="plain dropdown-toggle" aria-label="Display settings"><svg width="20" height="20"><path d="M.7 1H19.300V15H.7z" fill="#e8e8e8" stroke="#4c5058" stroke-width="1.300"/><path d="M3.500 4H16.500V12.500H3.500z" fill="#95b9e2" stroke="#426aa0"/><path d="M7 15.500H13V17H15V19H5V17H7z" fill="#ddd" stroke="#444"/></svg></button>
    <button class="plain dropdown-toggle" aria-label="Grid"><svg width="20" height="20" fill="#fff" stroke="#666"><path d="M.500.500H19.500V19.500H.500zM4.500 0V20M8.500 0V20M12.500 0V20M16.500 0V20M0 4.500H20M0 8.500H20M0 12.500H20M0 16.500H20"/></svg></button>
    <button class="plain dropdown-toggle" aria-label="Viewports"><svg width="20" height="17"><path d="M0 0H20V17H0z" fill="#33517f"/><path d="M1.500 1.500H9V7.500H1.500zM11 1.500H18.500V7.500H11zM1.500 9.500H9V15.500H1.500zM11 9.500H18.500V15.500H11z" fill="#92b1dc"/><path d="M4 3.500H7V5.500H4zM13 3.500H16V5.500H13zM4 11.500H7V13.500H4zM13 11.500H16V13.500H13z" fill="none" stroke="#5c80b4"/></svg></button>
  </div>
  <div class="selection-info position-absolute">1 Profile | Area : 900.00 mm^2</div>
</main>

<footer class="timeline d-flex align-items-center">
  <div class="play-set d-flex align-items-center">
    <button class="plain" aria-label="First"><svg width="16" height="17" fill="currentColor"><path d="M1 0H3.500V17H1zM16 0V17L4 8.500z"/></svg></button>
    <button class="plain" aria-label="Step back"><svg width="16" height="17" fill="currentColor"><path d="M11 1V16L0 8.500zM12.500 5H15V12H12.500z"/></svg></button>
    <button class="plain" aria-label="Play"><svg width="16" height="19" fill="currentColor"><path d="M0 0 15 9.500 0 19z"/></svg></button>
    <button class="plain" aria-label="Step forward"><svg width="16" height="17" fill="currentColor"><path d="M4 1V16L16 8.500zM0 5H3V12H0z"/></svg></button>
    <button class="plain" aria-label="Last"><svg width="16" height="17" fill="currentColor"><path d="M12.500 0H15V17H12.500zM0 0V17L12 8.500z"/></svg></button>
  </div>
  <svg class="history align-self-end" width="98" height="44">
    <g transform="translate(1 10)"><use href="#sk" width="22" height="22"/><path d="M1 1h3v3H1zM17 1h3v3h-3zM1 17h3v3H1z" fill="#1d8fe8"/></g>
    <g transform="translate(31 9)"><use href="#box-up" width="22" height="22"/></g>
    <rect x="57" y="6" width="29" height="30" rx="2" fill="#0a98dc"/><use href="#sk" x="61" y="10" width="22" height="22"/>
    <path d="M13 35V42.500H72V36M42 35V42" fill="none" stroke="#c5c5c5" stroke-width="2"/>
    <path d="M79 3H94V8L88.500 13V44H85V13L79 8z" fill="#636363"/>
  </svg>
  <button class="plain ms-auto" aria-label="Timeline settings"><svg width="21" height="20"><use href="#gear"/></svg></button>
</footer>
<script>
// ground grid: two families of lines through the origin (671, 587); every fifth line is a major one
const slope = 0.577, step = 18.68, x0 = -1029, x1 = 2371;
const lines = {gridMinor: '', gridMajor: ''};
for (let k = -120; k <= 120; k++) {
  const name = k % 5 ? 'gridMinor' : 'gridMajor';
  for (const m of [slope, -slope]) {
    const y = x => (587 + k * step + m * (x - 671)).toFixed(1);
    lines[name] += `M${x0} ${y(x0)}L${x1} ${y(x1)}`;
  }
}
for (const id in lines) document.getElementById(id).setAttribute('d', lines[id]);
</script>
<script src="https://cdn.jsdelivr.net/npm/bootstrap@5.3.0/dist/js/bootstrap.bundle.min.js"></script>
</body>
</html>
